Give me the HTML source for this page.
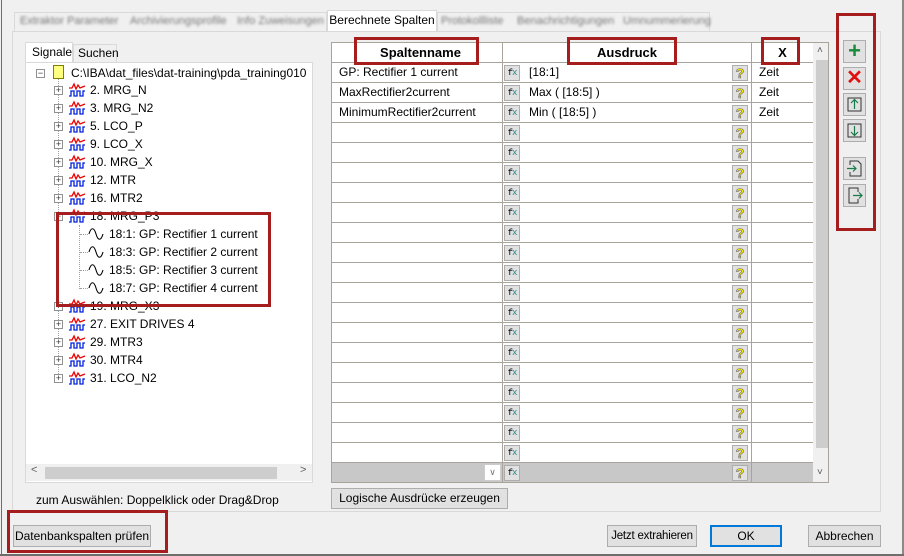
<!DOCTYPE html>
<html><head><meta charset="utf-8"><style>
*{box-sizing:border-box;margin:0;padding:0}
body{width:904px;height:556px;background:#f0f0f0;font-family:"Liberation Sans",sans-serif;font-size:12px;color:#000;position:relative;overflow:hidden}
.a{position:absolute}
.blur{filter:blur(1.3px);color:#777;font-size:11px}
.btn{position:absolute;background:#e1e1e1;border:1px solid #adadad;text-align:center;line-height:18px;font-size:12px;white-space:nowrap}
.red{position:absolute;border:3px solid #a51d1d}
.row{position:absolute;left:0;width:481px;height:20px;border-bottom:1px solid #a9a49a}
.row .c1{position:absolute;left:0;width:171px;height:19px;border-right:1px solid #a9a49a;padding-left:7px;line-height:19px}
.row .fx{position:absolute;left:172px;top:2px;width:16px;height:16px;background:#e1e1e1;border:1px solid #adadad;font-size:9px;line-height:14px;text-align:center;font-family:"Liberation Mono",monospace;letter-spacing:-1px}
.row .fx i{color:#1a8a8a;font-style:normal}
.row .ex{position:absolute;left:197px;line-height:19px}
.row .q{position:absolute;left:400px;top:2px;width:16px;height:16px;background:#e1e1e1;border:1px solid #adadad;color:#ffee00;font-weight:bold;font-size:14px;line-height:15px;text-align:center;-webkit-text-stroke:0.6px #666}
.row .c4{position:absolute;left:419px;width:62px;height:19px;border-left:1px solid #a9a49a;padding-left:7px;line-height:19px}
.tr{position:absolute;height:18px;line-height:18px;white-space:nowrap}
.pm{position:absolute;width:9px;height:9px;border:1px solid #919191;background:#fff;font-size:9px;line-height:7px;text-align:center;color:#333}
.ic{position:absolute;width:18px;height:16px}
</style></head><body>
<div class="a" style="left:1px;top:0;width:1px;height:556px;background:#6e6e6e"></div>
<div class="a" style="left:902px;top:0;width:2px;height:556px;background:#8a8a8a"></div>
<div class="a" style="left:0;top:554px;width:904px;height:2px;background:#6e6e6e"></div>

<div class="a" style="left:14px;top:12px;width:313px;height:19px;background:#f0f0f0;border:1px solid #d9d9d9;border-bottom:none"></div>
<div class="a blur" style="left:20px;top:15px">Extraktor Parameter</div>
<div class="a blur" style="left:130px;top:15px">Archivierungsprofile</div>
<div class="a blur" style="left:237px;top:15px">Info Zuweisungen</div>
<div class="a" style="left:327px;top:10px;width:110px;height:22px;background:#fff;border:1px solid #d9d9d9;border-bottom:none;line-height:19px;text-align:center">Berechnete Spalten</div>
<div class="a" style="left:437px;top:12px;width:273px;height:19px;border:1px solid #d9d9d9;border-bottom:none"></div>
<div class="a blur" style="left:441px;top:15px">Protokollliste</div>
<div class="a blur" style="left:517px;top:15px">Benachrichtigungen</div>
<div class="a blur" style="left:623px;top:15px">Umnummerierung</div>

<div class="a" style="left:12px;top:31px;width:869px;height:481px;border:1px solid #d9d9d9;background:#f0f0f0"></div>

<div class="a" style="left:25px;top:42px;width:48px;height:21px;background:#fff;border:1px solid #d9d9d9;border-bottom:none;padding-left:6px;line-height:19px">Signale</div>
<div class="a" style="left:73px;top:44px;width:44px;height:18px;border:1px solid #d9d9d9;border-bottom:none;padding-left:4px;line-height:17px">Suchen</div>
<div class="a" style="left:25px;top:62px;width:288px;height:421px;background:#fff;border:1px solid #d9d9d9"></div>
<div class="a" style="left:26px;top:464px;width:286px;height:17px;background:#f0f0f0"></div>
<div class="a" style="left:45px;top:467px;width:232px;height:12px;background:#cdcdcd"></div>
<div class="a" style="left:31px;top:464px;color:#606060;font-size:11px">&lt;</div>
<div class="a" style="left:300px;top:464px;color:#606060;font-size:11px">&gt;</div>

<div class="a" style="left:58px;top:78px;height:302px;border-left:1px dotted #a0a0a0"></div>
<div class="a" style="left:79px;top:225px;height:64px;border-left:1px dotted #a0a0a0"></div>

<div class="pm" style="left:36px;top:69px">−</div>
<div class="a" style="left:53px;top:65px;width:11px;height:14px;background:#ffff80;border:1px solid #808000"></div>
<div class="tr" style="left:71px;top:64px">C:\IBA\dat_files\dat-training\pda_training010</div>

<div class="pm" style="left:54px;top:86px">+</div><svg class="ic" style="left:68px;top:82px"><path d="M1 6 L4 6 L6 2 L8 7 L10 3 L12 6 L17 4" stroke="#e00" fill="none" stroke-width="1.3"/><path d="M1 14 L3 14 L3 9 L6 9 L6 14 L9 14 L9 9 L12 9 L12 14 L15 14 L15 9 L17 9" stroke="#0020e0" fill="none" stroke-width="1.3"/></svg><div class="tr" style="left:90px;top:81px">2. MRG_N</div>
<div class="pm" style="left:54px;top:104px">+</div><svg class="ic" style="left:68px;top:100px"><path d="M1 6 L4 6 L6 2 L8 7 L10 3 L12 6 L17 4" stroke="#e00" fill="none" stroke-width="1.3"/><path d="M1 14 L3 14 L3 9 L6 9 L6 14 L9 14 L9 9 L12 9 L12 14 L15 14 L15 9 L17 9" stroke="#0020e0" fill="none" stroke-width="1.3"/></svg><div class="tr" style="left:90px;top:99px">3. MRG_N2</div>
<div class="pm" style="left:54px;top:122px">+</div><svg class="ic" style="left:68px;top:118px"><path d="M1 6 L4 6 L6 2 L8 7 L10 3 L12 6 L17 4" stroke="#e00" fill="none" stroke-width="1.3"/><path d="M1 14 L3 14 L3 9 L6 9 L6 14 L9 14 L9 9 L12 9 L12 14 L15 14 L15 9 L17 9" stroke="#0020e0" fill="none" stroke-width="1.3"/></svg><div class="tr" style="left:90px;top:117px">5. LCO_P</div>
<div class="pm" style="left:54px;top:140px">+</div><svg class="ic" style="left:68px;top:136px"><path d="M1 6 L4 6 L6 2 L8 7 L10 3 L12 6 L17 4" stroke="#e00" fill="none" stroke-width="1.3"/><path d="M1 14 L3 14 L3 9 L6 9 L6 14 L9 14 L9 9 L12 9 L12 14 L15 14 L15 9 L17 9" stroke="#0020e0" fill="none" stroke-width="1.3"/></svg><div class="tr" style="left:90px;top:135px">9. LCO_X</div>
<div class="pm" style="left:54px;top:158px">+</div><svg class="ic" style="left:68px;top:154px"><path d="M1 6 L4 6 L6 2 L8 7 L10 3 L12 6 L17 4" stroke="#e00" fill="none" stroke-width="1.3"/><path d="M1 14 L3 14 L3 9 L6 9 L6 14 L9 14 L9 9 L12 9 L12 14 L15 14 L15 9 L17 9" stroke="#0020e0" fill="none" stroke-width="1.3"/></svg><div class="tr" style="left:90px;top:153px">10. MRG_X</div>
<div class="pm" style="left:54px;top:176px">+</div><svg class="ic" style="left:68px;top:172px"><path d="M1 6 L4 6 L6 2 L8 7 L10 3 L12 6 L17 4" stroke="#e00" fill="none" stroke-width="1.3"/><path d="M1 14 L3 14 L3 9 L6 9 L6 14 L9 14 L9 9 L12 9 L12 14 L15 14 L15 9 L17 9" stroke="#0020e0" fill="none" stroke-width="1.3"/></svg><div class="tr" style="left:90px;top:171px">12. MTR</div>
<div class="pm" style="left:54px;top:194px">+</div><svg class="ic" style="left:68px;top:190px"><path d="M1 6 L4 6 L6 2 L8 7 L10 3 L12 6 L17 4" stroke="#e00" fill="none" stroke-width="1.3"/><path d="M1 14 L3 14 L3 9 L6 9 L6 14 L9 14 L9 9 L12 9 L12 14 L15 14 L15 9 L17 9" stroke="#0020e0" fill="none" stroke-width="1.3"/></svg><div class="tr" style="left:90px;top:189px">16. MTR2</div>
<div class="pm" style="left:54px;top:212px">−</div><svg class="ic" style="left:68px;top:208px"><path d="M1 6 L4 6 L6 2 L8 7 L10 3 L12 6 L17 4" stroke="#e00" fill="none" stroke-width="1.3"/><path d="M1 14 L3 14 L3 9 L6 9 L6 14 L9 14 L9 9 L12 9 L12 14 L15 14 L15 9 L17 9" stroke="#0020e0" fill="none" stroke-width="1.3"/></svg><div class="tr" style="left:90px;top:207px">18. MRG_P3</div>

<div class="a" style="left:80px;top:234px;width:8px;border-top:1px dotted #a0a0a0"></div><svg class="a" style="left:88px;top:227px" width="16" height="14"><path d="M1 7 C3 0 6 0 8 7 S13 14 15 7" stroke="#000" fill="none" stroke-width="1.1"/></svg><div class="tr" style="left:109px;top:225px">18:1: GP: Rectifier 1 current</div>
<div class="a" style="left:80px;top:252px;width:8px;border-top:1px dotted #a0a0a0"></div><svg class="a" style="left:88px;top:245px" width="16" height="14"><path d="M1 7 C3 0 6 0 8 7 S13 14 15 7" stroke="#000" fill="none" stroke-width="1.1"/></svg><div class="tr" style="left:109px;top:243px">18:3: GP: Rectifier 2 current</div>
<div class="a" style="left:80px;top:270px;width:8px;border-top:1px dotted #a0a0a0"></div><svg class="a" style="left:88px;top:263px" width="16" height="14"><path d="M1 7 C3 0 6 0 8 7 S13 14 15 7" stroke="#000" fill="none" stroke-width="1.1"/></svg><div class="tr" style="left:109px;top:261px">18:5: GP: Rectifier 3 current</div>
<div class="a" style="left:80px;top:288px;width:8px;border-top:1px dotted #a0a0a0"></div><svg class="a" style="left:88px;top:281px" width="16" height="14"><path d="M1 7 C3 0 6 0 8 7 S13 14 15 7" stroke="#000" fill="none" stroke-width="1.1"/></svg><div class="tr" style="left:109px;top:279px">18:7: GP: Rectifier 4 current</div>

<div class="pm" style="left:54px;top:302px">+</div><svg class="ic" style="left:68px;top:298px"><path d="M1 6 L4 6 L6 2 L8 7 L10 3 L12 6 L17 4" stroke="#e00" fill="none" stroke-width="1.3"/><path d="M1 14 L3 14 L3 9 L6 9 L6 14 L9 14 L9 9 L12 9 L12 14 L15 14 L15 9 L17 9" stroke="#0020e0" fill="none" stroke-width="1.3"/></svg><div class="tr" style="left:90px;top:297px">19. MRG_X3</div>
<div class="pm" style="left:54px;top:320px">+</div><svg class="ic" style="left:68px;top:316px"><path d="M1 6 L4 6 L6 2 L8 7 L10 3 L12 6 L17 4" stroke="#e00" fill="none" stroke-width="1.3"/><path d="M1 14 L3 14 L3 9 L6 9 L6 14 L9 14 L9 9 L12 9 L12 14 L15 14 L15 9 L17 9" stroke="#0020e0" fill="none" stroke-width="1.3"/></svg><div class="tr" style="left:90px;top:315px">27. EXIT DRIVES 4</div>
<div class="pm" style="left:54px;top:338px">+</div><svg class="ic" style="left:68px;top:334px"><path d="M1 6 L4 6 L6 2 L8 7 L10 3 L12 6 L17 4" stroke="#e00" fill="none" stroke-width="1.3"/><path d="M1 14 L3 14 L3 9 L6 9 L6 14 L9 14 L9 9 L12 9 L12 14 L15 14 L15 9 L17 9" stroke="#0020e0" fill="none" stroke-width="1.3"/></svg><div class="tr" style="left:90px;top:333px">29. MTR3</div>
<div class="pm" style="left:54px;top:356px">+</div><svg class="ic" style="left:68px;top:352px"><path d="M1 6 L4 6 L6 2 L8 7 L10 3 L12 6 L17 4" stroke="#e00" fill="none" stroke-width="1.3"/><path d="M1 14 L3 14 L3 9 L6 9 L6 14 L9 14 L9 9 L12 9 L12 14 L15 14 L15 9 L17 9" stroke="#0020e0" fill="none" stroke-width="1.3"/></svg><div class="tr" style="left:90px;top:351px">30. MTR4</div>
<div class="pm" style="left:54px;top:374px">+</div><svg class="ic" style="left:68px;top:370px"><path d="M1 6 L4 6 L6 2 L8 7 L10 3 L12 6 L17 4" stroke="#e00" fill="none" stroke-width="1.3"/><path d="M1 14 L3 14 L3 9 L6 9 L6 14 L9 14 L9 9 L12 9 L12 14 L15 14 L15 9 L17 9" stroke="#0020e0" fill="none" stroke-width="1.3"/></svg><div class="tr" style="left:90px;top:369px">31. LCO_N2</div>

<div class="red" style="left:56px;top:212px;width:215px;height:95px"></div>

<div class="a" style="left:36px;top:493px">zum Auswählen: Doppelklick oder Drag&amp;Drop</div>

<div class="a" style="left:331px;top:42px;width:498px;height:441px;background:#fff;border:1px solid #a9a49a;overflow:hidden">
 <div class="row" style="top:0"><div class="c1" style="font-weight:bold;font-size:13px;text-align:center">Spaltenname</div><div class="a" style="left:171px;width:248px;text-align:center;font-weight:bold;font-size:13px;line-height:19px">Ausdruck</div><div class="c4" style="font-weight:bold;font-size:13px;text-align:center;padding-left:0">X</div></div>
 <div class="row" style="top:20px"><div class="c1">GP: Rectifier 1 current</div><div class="fx">f<i>x</i></div><div class="ex">[18:1]</div><div class="q">?</div><div class="c4">Zeit</div></div>
 <div class="row" style="top:40px"><div class="c1">MaxRectifier2current</div><div class="fx">f<i>x</i></div><div class="ex">Max ( [18:5] )</div><div class="q">?</div><div class="c4">Zeit</div></div>
 <div class="row" style="top:60px"><div class="c1">MinimumRectifier2current</div><div class="fx">f<i>x</i></div><div class="ex">Min ( [18:5] )</div><div class="q">?</div><div class="c4">Zeit</div></div>
 <div class="row" style="top:80px"><div class="c1"></div><div class="fx">f<i>x</i></div><div class="q">?</div><div class="c4"></div></div>
 <div class="row" style="top:100px"><div class="c1"></div><div class="fx">f<i>x</i></div><div class="q">?</div><div class="c4"></div></div>
 <div class="row" style="top:120px"><div class="c1"></div><div class="fx">f<i>x</i></div><div class="q">?</div><div class="c4"></div></div>
 <div class="row" style="top:140px"><div class="c1"></div><div class="fx">f<i>x</i></div><div class="q">?</div><div class="c4"></div></div>
 <div class="row" style="top:160px"><div class="c1"></div><div class="fx">f<i>x</i></div><div class="q">?</div><div class="c4"></div></div>
 <div class="row" style="top:180px"><div class="c1"></div><div class="fx">f<i>x</i></div><div class="q">?</div><div class="c4"></div></div>
 <div class="row" style="top:200px"><div class="c1"></div><div class="fx">f<i>x</i></div><div class="q">?</div><div class="c4"></div></div>
 <div class="row" style="top:220px"><div class="c1"></div><div class="fx">f<i>x</i></div><div class="q">?</div><div class="c4"></div></div>
 <div class="row" style="top:240px"><div class="c1"></div><div class="fx">f<i>x</i></div><div class="q">?</div><div class="c4"></div></div>
 <div class="row" style="top:260px"><div class="c1"></div><div class="fx">f<i>x</i></div><div class="q">?</div><div class="c4"></div></div>
 <div class="row" style="top:280px"><div class="c1"></div><div class="fx">f<i>x</i></div><div class="q">?</div><div class="c4"></div></div>
 <div class="row" style="top:300px"><div class="c1"></div><div class="fx">f<i>x</i></div><div class="q">?</div><div class="c4"></div></div>
 <div class="row" style="top:320px"><div class="c1"></div><div class="fx">f<i>x</i></div><div class="q">?</div><div class="c4"></div></div>
 <div class="row" style="top:340px"><div class="c1"></div><div class="fx">f<i>x</i></div><div class="q">?</div><div class="c4"></div></div>
 <div class="row" style="top:360px"><div class="c1"></div><div class="fx">f<i>x</i></div><div class="q">?</div><div class="c4"></div></div>
 <div class="row" style="top:380px"><div class="c1"></div><div class="fx">f<i>x</i></div><div class="q">?</div><div class="c4"></div></div>
 <div class="row" style="top:400px"><div class="c1"></div><div class="fx">f<i>x</i></div><div class="q">?</div><div class="c4"></div></div>
 <div class="row" style="top:420px;background:#c8c8c8;border-bottom:none"><div class="c1"><div class="a" style="left:152px;top:1px;width:17px;height:17px;background:#fff;border:1px solid #ccc;color:#777;font-size:9px;text-align:center;line-height:15px">∨</div></div><div class="fx">f<i>x</i></div><div class="q">?</div><div class="c4"></div></div>
 <div class="a" style="left:481px;top:0;width:17px;height:441px;background:#f0f0f0"></div>
 <div class="a" style="left:484px;top:17px;width:12px;height:388px;background:#cdcdcd"></div>
 <div class="a" style="left:485px;top:2px;font-size:10px;color:#555">˄</div>
 <div class="a" style="left:485px;top:424px;font-size:10px;color:#555">˅</div>
</div>
<div class="red" style="left:354px;top:37px;width:125px;height:28px"></div>
<div class="red" style="left:567px;top:37px;width:110px;height:28px"></div>
<div class="red" style="left:761px;top:37px;width:39px;height:28px"></div>

<div class="btn" style="left:843px;top:40px;width:23px;height:23px;color:#1a8a3a;font-size:22px;line-height:19px;font-weight:bold">+</div>
<div class="btn" style="left:843px;top:67px;width:23px;height:23px;color:#e01010;font-size:20px;line-height:21px;font-weight:bold">✕</div>
<div class="btn" style="left:843px;top:93px;width:23px;height:23px"><svg width="21" height="21"><rect x="4" y="4" width="13" height="13" fill="none" stroke="#333"/><path d="M10.5 15V6M7 9l3.5-3.5L14 9" stroke="#1a7a4a" fill="none" stroke-width="1.2"/></svg></div>
<div class="btn" style="left:843px;top:119px;width:23px;height:23px"><svg width="21" height="21"><rect x="4" y="4" width="13" height="13" fill="none" stroke="#333"/><path d="M10.5 6v9M7 12l3.5 3.5L14 12" stroke="#1a7a4a" fill="none" stroke-width="1.2"/></svg></div>
<div class="btn" style="left:843px;top:157px;width:23px;height:23px"><svg width="21" height="21"><path d="M6 7V3h8l3 3v12H6v-4" stroke="#333" fill="none"/><path d="M3 10.5h9M9 7.5l3 3-3 3" stroke="#1a7a4a" fill="none" stroke-width="1.2"/></svg></div>
<div class="btn" style="left:843px;top:184px;width:23px;height:23px"><svg width="21" height="21"><path d="M14 7V3H5v15h9v-4" stroke="#333" fill="none"/><path d="M9 10.5h9M15 7.5l3 3-3 3" stroke="#1a7a4a" fill="none" stroke-width="1.2"/></svg></div>
<div class="red" style="left:836px;top:13px;width:40px;height:218px"></div>

<div class="btn" style="left:331px;top:488px;width:177px;height:21px">Logische Ausdrücke erzeugen</div>
<div class="btn" style="left:13px;top:525px;width:138px;height:22px;line-height:20px">Datenbankspalten prüfen</div>
<div class="red" style="left:7px;top:510px;width:161px;height:43px"></div>
<div class="btn" style="left:607px;top:525px;width:90px;height:22px;line-height:20px;font-size:11.5px;letter-spacing:-0.2px">Jetzt extrahieren</div>
<div class="btn" style="left:710px;top:525px;width:72px;height:22px;line-height:18px;border:2px solid #0078d7">OK</div>
<div class="btn" style="left:808px;top:525px;width:73px;height:22px;line-height:20px">Abbrechen</div>
</body></html>
